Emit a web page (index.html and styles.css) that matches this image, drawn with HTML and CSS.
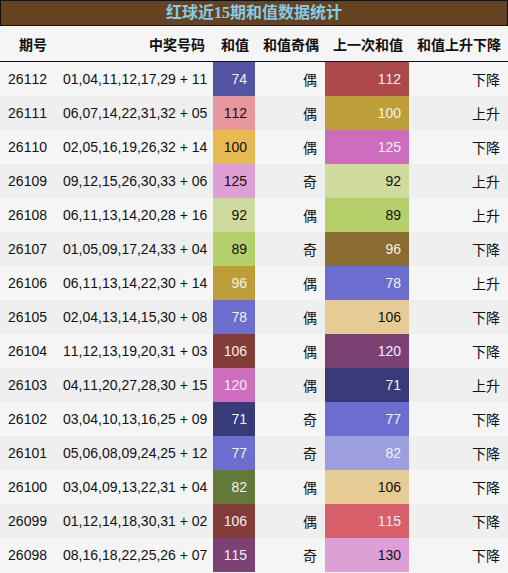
FILE: index.html
```html
<!DOCTYPE html>
<html lang="zh-CN">
<head>
    <meta charset="UTF-8">
    <meta name="viewport" content="width=device-width, initial-scale=1.0">
    <title>红球近15期和值数据统计</title>
    <link rel="stylesheet" href="styles.css">
</head>
<body>
    <div class="title">红球近15期和值数据统计</div>
    <table class="stats">
        <colgroup>
            <col class="c-issue">
            <col class="c-nums">
            <col class="c-sum">
            <col class="c-parity">
            <col class="c-prev">
            <col class="c-trend">
        </colgroup>
        <thead>
            <tr>
                <th>期号</th>
                <th>中奖号码</th>
                <th>和值</th>
                <th>和值奇偶</th>
                <th>上一次和值</th>
                <th>和值上升下降</th>
            </tr>
        </thead>
        <tbody id="rows"></tbody>
    </table>
    <script>
        // issue, numbers, sum, sum colour, parity, previous sum, previous colour, trend
        const rows = [
            ['26112', '01,04,11,12,17,29 + 11', 74, '#5254a3', '偶', 112, '#ad494a', '下降'],
            ['26111', '06,07,14,22,31,32 + 05', 112, '#e7969c', '偶', 100, '#bd9e39', '上升'],
            ['26110', '02,05,16,19,26,32 + 14', 100, '#e7ba52', '偶', 125, '#ce6dbd', '下降'],
            ['26109', '09,12,15,26,30,33 + 06', 125, '#de9ed6', '奇', 92, '#cedb9c', '上升'],
            ['26108', '06,11,13,14,20,28 + 16', 92, '#cedb9c', '偶', 89, '#b5cf6b', '上升'],
            ['26107', '01,05,09,17,24,33 + 04', 89, '#b5cf6b', '奇', 96, '#8c6d31', '下降'],
            ['26106', '06,11,13,14,22,30 + 14', 96, '#bd9e39', '偶', 78, '#6b6ecf', '上升'],
            ['26105', '02,04,13,14,15,30 + 08', 78, '#6b6ecf', '偶', 106, '#e7cb94', '下降'],
            ['26104', '11,12,13,19,20,31 + 03', 106, '#843c39', '偶', 120, '#7b4173', '下降'],
            ['26103', '04,11,20,27,28,30 + 15', 120, '#ce6dbd', '偶', 71, '#393b79', '上升'],
            ['26102', '03,04,10,13,16,25 + 09', 71, '#393b79', '奇', 77, '#6b6ecf', '下降'],
            ['26101', '05,06,08,09,24,25 + 12', 77, '#6b6ecf', '奇', 82, '#9c9ede', '下降'],
            ['26100', '03,04,09,13,22,31 + 04', 82, '#637939', '偶', 106, '#e7cb94', '下降'],
            ['26099', '01,12,14,18,30,31 + 02', 106, '#843c39', '偶', 115, '#d6616b', '下降'],
            ['26098', '08,16,18,22,25,26 + 07', 115, '#7b4173', '奇', 130, '#de9ed6', '下降']
        ];

        // light fills get black text, the rest white
        const light = ['#e7969c', '#e7ba52', '#de9ed6', '#cedb9c', '#b5cf6b', '#e7cb94'];

        function colorCell(value, color) {
            const cls = light.includes(color) ? 'dark-text' : 'light-text';
            return `<td class="${cls}" style="background-color: ${color}">${value}</td>`;
        }

        const tbody = document.getElementById('rows');
        tbody.innerHTML = rows.map(r => `
            <tr>
                <td>${r[0]}</td>
                <td>${r[1]}</td>
                ${colorCell(r[2], r[3])}
                <td>${r[4]}</td>
                ${colorCell(r[5], r[6])}
                <td>${r[7]}</td>
            </tr>
        `).join('');
    </script>
</body>
</html>
```

FILE: styles.css
```css
body {
    margin: 0;
    background-color: #f5f5f5;
    font-family: "Liberation Sans", "Noto Sans CJK SC", sans-serif;
    font-size: 14px;
    font-kerning: none;
    color: #111;
}
.title {
    height: 24px;
    line-height: 24px;
    background-color: #654321;
    border: 1px solid #111;
    color: #87cbe6;
    font-family: "Liberation Serif", "Noto Sans CJK SC", serif;
    font-size: 16px;
    font-weight: bold;
    text-align: center;
}
.stats {
    width: 508px;
    border-collapse: collapse;
    table-layout: fixed;
}
.c-issue { width: 55px; }
.c-nums { width: 158px; }
.c-sum { width: 42px; }
.c-parity { width: 70px; }
.c-prev { width: 84px; }
.c-trend { width: 99px; }
th, td {
    padding: 0 8px;
    text-align: right;
    white-space: nowrap;
}
th {
    height: 35px;
    font-weight: bold;
    background-color: #f5f5f5;
    border-bottom: 1px solid #111;
}
td {
    height: 34px;
}
tbody tr:nth-child(odd) {
    background-color: #f5f5f5;
}
tbody tr:nth-child(even) {
    background-color: #efefef;
}
.light-text {
    color: #f2f2f2;
}
.dark-text {
    color: #111;
}
```
